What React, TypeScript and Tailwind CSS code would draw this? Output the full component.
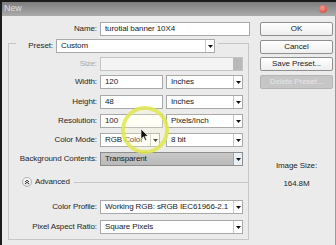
const Arrow = () => (
  <svg width="5" height="3" viewBox="0 0 5 3">
    <path d="M0 0 L5 0 L2.5 3 Z" fill="#111" />
  </svg>
);

function Select({
  value,
  w,
  muted,
  hl,
}: {
  value: string;
  w: string;
  muted?: boolean;
  hl?: boolean;
}) {
  return (
    <div
      className={`${w} h-[14px] flex border ${
        hl
          ? 'border-[#8d8d8d] bg-gradient-to-b from-[#c9c9c9] to-[#b9b9b9]'
          : muted
          ? 'border-[#c4c4c4] bg-[#f4f4f4]'
          : 'border-[#a9a9a9] bg-white'
      }`}
    >
      <div className="flex-1 pl-[4px] leading-[12px] whitespace-nowrap overflow-hidden text-[#1a1a1a]">
        {value}
      </div>
      {muted ? (
        <div className="w-[9px] bg-[#b9b9b9]" />
      ) : (
        <div
          className={`w-[9px] flex items-center justify-center border-l ${
            hl ? 'border-[#9aa6b2] bg-[#e9f1f8]' : 'border-[#c8c8c8] bg-white'
          }`}
        >
          <Arrow />
        </div>
      )}
    </div>
  );
}

function Field({ value, w }: { value: string; w: string }) {
  return (
    <div className={`${w} h-[14px] border border-[#a9a9a9] bg-white pl-[4px] leading-[12px] text-[#1a1a1a] whitespace-nowrap overflow-hidden`}>
      {value}
    </div>
  );
}

function Row({
  label,
  mt,
  grey,
  children,
}: {
  label: string;
  mt: string;
  grey?: boolean;
  children: React.ReactNode;
}) {
  return (
    <div className={`flex items-center ${mt}`}>
      <div className={`w-[88px] text-right whitespace-nowrap ${grey ? 'text-[#a8a8a8]' : 'text-[#262626]'}`}>
        {label}
      </div>
      <div className="ml-[3px] flex gap-[3px]">{children}</div>
    </div>
  );
}

function Button({ label, mt, disabled }: { label: string; mt: string; disabled?: boolean }) {
  return (
    <div
      className={`${mt} h-[14px] rounded-[2px] border text-center leading-[12px] ${
        disabled
          ? 'border-[#b4b4b4] bg-[#c6c6c6] text-[#e6e6e6]'
          : 'border-[#8f8f8f] bg-gradient-to-b from-white to-[#eeeeee] text-[#222]'
      }`}
    >
      {label}
    </div>
  );
}

export default function App() {
  return (
    <div className="relative w-[336px] h-[245px] overflow-hidden bg-[#1c1c1c] font-['Liberation_Sans',Arial,sans-serif] text-[8px] tracking-[-0.1px]">
      <div className="ml-[2px] mt-[2px] h-[243px] flex flex-col">
        {/* title bar */}
        <div className="h-[14px] flex items-center justify-between bg-gradient-to-b from-[#7d7d7d] to-[#ababab] px-[2px]">
          <span className="text-[#dedede] text-[9px]">New</span>
          <div className="mr-[7px] w-[8px] h-[8px] rounded-full bg-[radial-gradient(circle_at_40%_35%,#f49a8e,#d03a2e)]" />
        </div>

        <div className="flex-1 flex bg-[#ebebeb] border-r border-[#9a9a9a]">
          {/* left column */}
          <div className="w-[252px] flex flex-col">
            <div className="mt-[6px] flex items-center">
              <div className="w-[95px] text-right text-[#262626]">Name:</div>
              <div className="ml-[3px]">
                <Field value="turotial banner 10X4" w="w-[150px]" />
              </div>
            </div>

            <div className="mt-[7px] ml-[6px] w-[241px] h-[197px] border-l border-r border-b border-[#c6c6c6] flex flex-col">
              <div className="-mt-[4px] h-[14px] flex">
                <div className="w-[7px] h-px mt-[4px] bg-[#c6c6c6]" />
                <div className="w-[37px] text-right self-center text-[#262626]">Preset:</div>
                <div className="ml-[3px]">
                  <Select value="Custom" w="w-[159px]" />
                </div>
                <div className="flex-1 ml-[3px] h-px mt-[4px] bg-[#c6c6c6]" />
              </div>

              <Row label="Size:" mt="mt-[4px]" grey>
                <Select value="" w="w-[143px]" muted />
              </Row>
              <Row label="Width:" mt="mt-[4px]">
                <Field value="120" w="w-[63px]" />
                <Select value="Inches" w="w-[77px]" />
              </Row>
              <Row label="Height:" mt="mt-[6px]">
                <Field value="48" w="w-[63px]" />
                <Select value="Inches" w="w-[77px]" />
              </Row>
              <Row label="Resolution:" mt="mt-[5px]">
                <Field value="100" w="w-[63px]" />
                <Select value="Pixels/Inch" w="w-[77px]" />
              </Row>
              <Row label="Color Mode:" mt="mt-[5px]">
                <Select value="RGB Color" w="w-[60px]" />
                <div className="ml-[3px]">
                  <Select value="8 bit" w="w-[77px]" />
                </div>
              </Row>
              <Row label="Background Contents:" mt="mt-[5px]">
                <Select value="Transparent" w="w-[143px]" hl />
              </Row>

              <div className="mt-[10px] h-[12px] flex items-center">
                <div className="ml-[13px] w-[10px] h-[10px] rounded-full border border-[#b0b0b0] bg-gradient-to-b from-white to-[#e2e2e2] flex items-center justify-center">
                  <svg width="6" height="6" viewBox="0 0 6 6">
                    <path d="M1 3 L3 1.2 L5 3 M1 5 L3 3.2 L5 5" stroke="#333" strokeWidth="1" fill="none" />
                  </svg>
                </div>
                <span className="ml-[3px] text-[#262626]">Advanced</span>
                <div className="flex-1 ml-[4px] h-px bg-[#c6c6c6]" />
              </div>

              <Row label="Color Profile:" mt="mt-[12px]">
                <Select value="Working RGB:  sRGB IEC61966-2.1" w="w-[143px]" />
              </Row>
              <Row label="Pixel Aspect Ratio:" mt="mt-[6px]">
                <Select value="Square Pixels" w="w-[143px]" />
              </Row>
            </div>
          </div>

          {/* right column */}
          <div className="ml-[6px] w-[73px] flex flex-col">
            <Button label="OK" mt="mt-[6px]" />
            <Button label="Cancel" mt="mt-[4px]" />
            <Button label="Save Preset..." mt="mt-[3px]" />
            <Button label="Delete Preset..." mt="mt-[4px]" disabled />
            <div className="mt-[71px] text-center text-[#262626]">Image Size:</div>
            <div className="mt-[6px] text-center text-[#262626]">164.8M</div>
          </div>
        </div>
      </div>

      {/* screen-recording highlight + cursor */}
      <svg className="absolute left-0 top-0 pointer-events-none" width="336" height="245">
        <circle cx="145" cy="130" r="22" fill="rgba(255,255,220,0.25)" stroke="#dfe84f" strokeOpacity="0.85" strokeWidth="4" />
        <path d="M141 129 L141 139 L143.5 136.8 L145.2 140.5 L146.6 139.8 L145 136.3 L148 136 Z" fill="#111" stroke="#fff" strokeWidth="0.6" />
      </svg>
    </div>
  );
}
